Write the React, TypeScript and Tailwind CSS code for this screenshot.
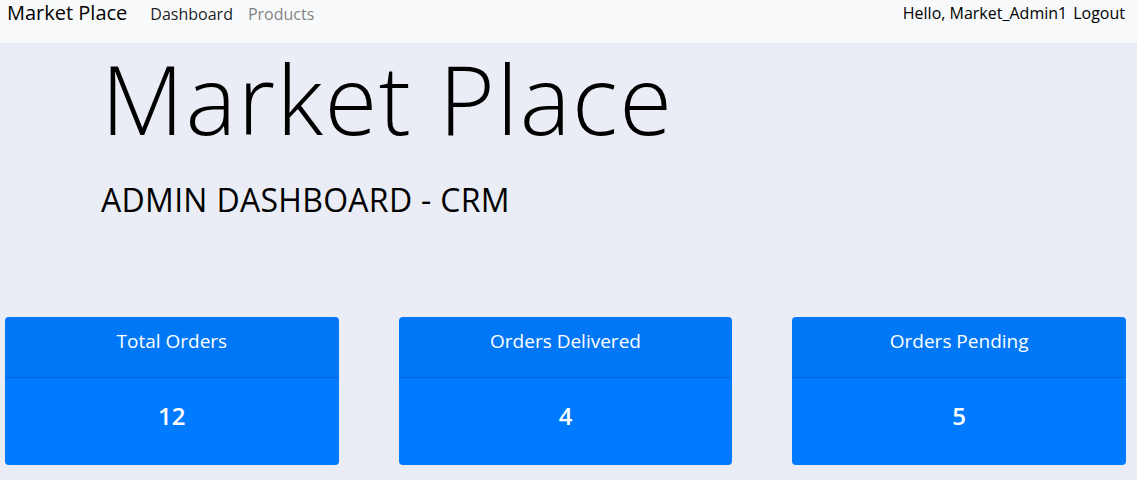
const stats = [
  { title: "Total Orders", value: "12" },
  { title: "Orders Delivered", value: "4" },
  { title: "Orders Pending", value: "5" },
];

function Navbar() {
  return (
    <nav className="h-[43px] bg-[#f8f9fa] flex items-start justify-between pl-[7px] pr-[12px]">
      <div className="flex items-baseline">
        <span className="text-[20px] leading-[26px] text-black mr-[23px]">Market Place</span>
        <a className="text-[16px] text-black/90 mr-[15px]">Dashboard</a>
        <a className="text-[16px] text-black/50">Products</a>
      </div>
      <div className="flex items-baseline gap-[6px] text-[16px] leading-[26px] text-black">
        <span>Hello, Market_Admin1</span>
        <a>Logout</a>
      </div>
    </nav>
  );
}

function StatCard({ title, value }: { title: string; value: string }) {
  return (
    <div className="bg-[#007bff] rounded-[4px] text-white text-center overflow-hidden">
      <div className="h-[61px] bg-black/[0.03] border-b border-black/[0.125] pt-[12px]">
        <span className="block text-[19px] leading-[24px] font-medium">{title}</span>
      </div>
      <div className="h-[87px] pt-[22px]">
        <span className="block text-[24px] leading-[32px] font-semibold">{value}</span>
      </div>
    </div>
  );
}

export default function App() {
  return (
    <main
      className="min-h-screen bg-[#eaedf5]"
      style={{ fontFamily: '"Open Sans", "Noto Sans", sans-serif' }}
    >
      <Navbar />
      <section className="pl-[101px] pt-0 h-[274px]">
        <h1 className="text-[96px] font-light leading-[1.15] text-black tracking-[1.5px]">
          Market Place
        </h1>
        <h3 className="mt-[28px] text-[32px] leading-[1.2] text-black tracking-[0.3px]">
          ADMIN DASHBOARD - CRM
        </h3>
      </section>
      <div className="grid grid-cols-3 gap-[60px] pl-[5px] pr-[11px]">
        {stats.map((s) => (
          <StatCard key={s.title} title={s.title} value={s.value} />
        ))}
      </div>
    </main>
  );
}
